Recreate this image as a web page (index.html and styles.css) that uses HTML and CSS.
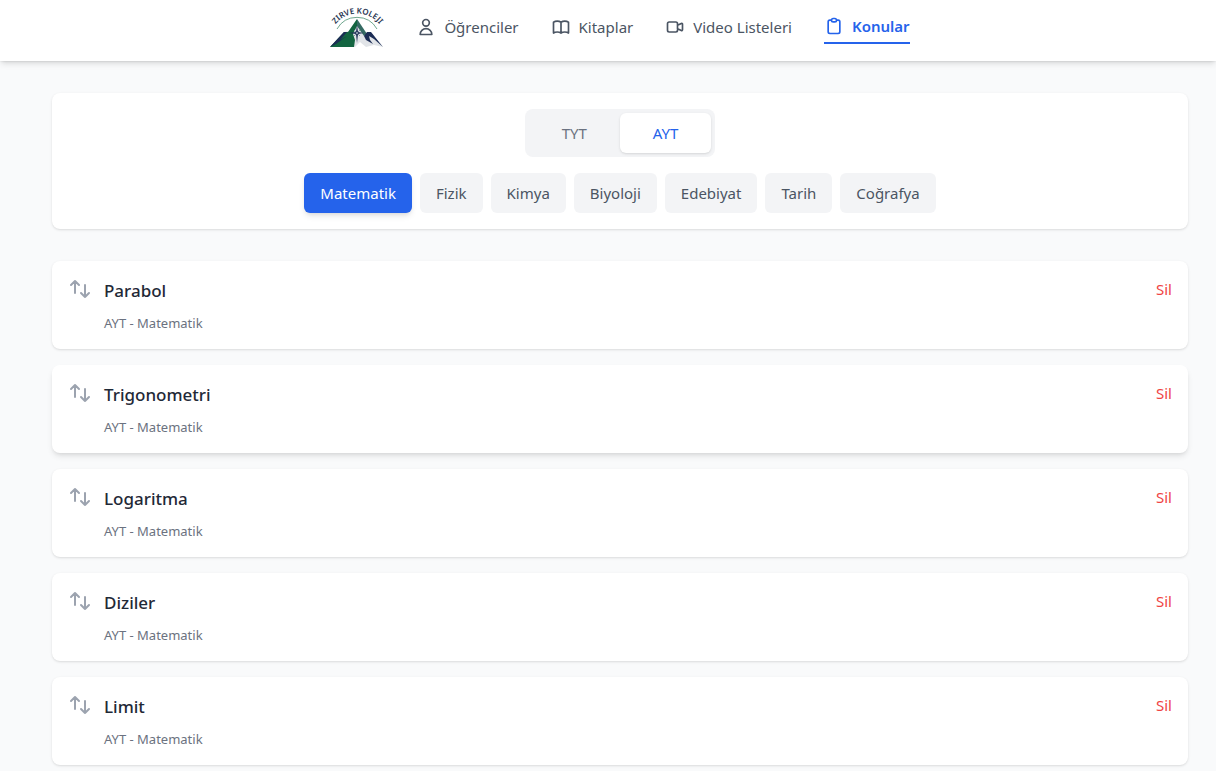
FILE: index.html
```html
<!DOCTYPE html>
<html lang="tr">
<head>
<meta charset="utf-8">
<meta name="viewport" content="width=device-width, initial-scale=1">
<title>Konular</title>
<link rel="stylesheet" href="styles.css">
</head>
<body>
<svg class="sprite" aria-hidden="true">
  <symbol id="sort" viewBox="0 0 24 24"><path d="M7 16V4m0 0L3 8m4-4l4 4m6 0v12m0 0l4-4m-4 4l-4-4"/></symbol>
</svg>
<header class="header">
  <nav class="nav">
    <a class="logo" href="#" aria-label="Ana sayfa">
      <svg class="logo-art" viewBox="0 0 54 42">
        <defs><path id="arc" d="M3 20A28 28 0 0 1 52 20"/></defs>
        <text class="logo-text"><textPath href="#arc" startOffset="50%" text-anchor="middle">ZIRVE KOLEJI</textPath></text>
        <path d="M7 21A23 23 0 0 1 47 21" fill="none" stroke="#6fa78f" stroke-width="1"/>
        <path d="M0 39L14 24L19 23L27 11L36 25L40 24L53 39L44 37L36 39L30 34L25 39Z" fill="#e1e4e8"/>
        <path d="M0 39L14 24L18 24L27 11V18L23 26L25 32L24 39Z" fill="#136541"/>
        <path d="M27 11L37 26L34 28L27 18Z" fill="#356b63"/>
        <path d="M0 39L14 24L17 24L10 32L17 28L6 36ZM34 28L37 24L41 24L53 39L44 31L39 28L40 32L43 36L36 32Z" fill="#1c2d55"/>
        <path d="M27 17L28 24L34 25L28 26L27 35L26 26L19 25L26 24Z" fill="#1c2d55"/>
        <path d="M24 22L30 28M30 22L24 28" stroke="#8393a6" stroke-width="1"/>
      </svg>
    </a>
    <a class="nav-link" href="#"><svg class="icon" viewBox="0 0 24 24"><path d="M16 7a4 4 0 11-8 0 4 4 0 018 0zM12 14a7 7 0 00-7 7h14a7 7 0 00-7-7z"/></svg>Öğrenciler</a>
    <a class="nav-link" href="#"><svg class="icon" viewBox="0 0 24 24"><path d="M12 6.253v13m0-13C10.832 5.477 9.246 5 7.500 5S4.168 5.477 3 6.253v13C4.168 18.477 5.754 18 7.500 18s3.332.477 4.500 1.253m0-13C13.168 5.477 14.754 5 16.500 5c1.747 0 3.332.477 4.500 1.253v13C19.832 18.477 18.247 18 16.500 18c-1.746 0-3.332.477-4.500 1.253"/></svg>Kitaplar</a>
    <a class="nav-link" href="#"><svg class="icon" viewBox="0 0 24 24"><path d="M15 10l4.553-2.276A1 1 0 0121 8.618v6.764a1 1 0 01-1.447.894L15 14M5 18h8a2 2 0 002-2V8a2 2 0 00-2-2H5a2 2 0 00-2 2v8a2 2 0 002 2z"/></svg>Video Listeleri</a>
    <a class="nav-link active" href="#" aria-current="page"><svg class="icon" viewBox="0 0 24 24"><path d="M9 5H7a2 2 0 00-2 2v12a2 2 0 002 2h10a2 2 0 002-2V7a2 2 0 00-2-2h-2M9 5a2 2 0 002 2h2a2 2 0 002-2M9 5a2 2 0 012-2h2a2 2 0 012 2"/></svg>Konular</a>
  </nav>
</header>
<main class="page">
  <section class="card filters">
    <div class="segmented">
      <button class="segment" type="button">TYT</button>
      <button class="segment selected" type="button" aria-pressed="true">AYT</button>
    </div>
    <div class="subjects">
      <button class="subject selected" type="button" aria-pressed="true">Matematik</button>
      <button class="subject" type="button">Fizik</button>
      <button class="subject" type="button">Kimya</button>
      <button class="subject" type="button">Biyoloji</button>
      <button class="subject" type="button">Edebiyat</button>
      <button class="subject" type="button">Tarih</button>
      <button class="subject" type="button">Coğrafya</button>
    </div>
  </section>
  <ul class="topics">
    <li class="card topic"><svg class="handle"><use href="#sort"/></svg><div class="info"><h3 class="title">Parabol</h3><p class="meta">AYT - Matematik</p></div><button class="delete" type="button">Sil</button></li>
    <li class="card topic raised"><svg class="handle"><use href="#sort"/></svg><div class="info"><h3 class="title">Trigonometri</h3><p class="meta">AYT - Matematik</p></div><button class="delete" type="button">Sil</button></li>
    <li class="card topic"><svg class="handle"><use href="#sort"/></svg><div class="info"><h3 class="title">Logaritma</h3><p class="meta">AYT - Matematik</p></div><button class="delete" type="button">Sil</button></li>
    <li class="card topic"><svg class="handle"><use href="#sort"/></svg><div class="info"><h3 class="title">Diziler</h3><p class="meta">AYT - Matematik</p></div><button class="delete" type="button">Sil</button></li>
    <li class="card topic"><svg class="handle"><use href="#sort"/></svg><div class="info"><h3 class="title">Limit</h3><p class="meta">AYT - Matematik</p></div><button class="delete" type="button">Sil</button></li>
  </ul>
</main>
</body>
</html>
```
FILE: styles.css
```css
* { box-sizing: border-box; }
html { scrollbar-width: none; }
body {
  margin: 0;
  background: #f9fafb;
  color: #1f2937;
  font: 15px/24px "Segoe UI", "Noto Sans", sans-serif;
}
h3, p, ul { margin: 0; padding: 0; }
button { border: 0; background: none; font: inherit; cursor: pointer; }
.sprite { display: none; }
.header {
  padding: 8px 0 11px 24px;
  background: #fff;
  box-shadow: 0 4px 6px -1px rgb(0 0 0 / 0.1), 0 2px 4px -2px rgb(0 0 0 / 0.1), 0 0 2px rgb(0 0 0 / 0.1);
}
.nav { display: flex; justify-content: center; align-items: center; gap: 32px; }
.logo { display: flex; }
.logo-art { width: 54px; height: 42px; overflow: visible; }
.logo-text { font: 600 8px "Noto Sans", sans-serif; fill: #26344f; }
.nav-link {
  display: flex;
  align-items: center;
  gap: 8px;
  padding-bottom: 4px;
  color: #4b5563;
  text-decoration: none;
}
.nav-link.active { color: #2563eb; font-weight: 600; border-bottom: 2px solid #2563eb; }
.icon, .handle { fill: none; stroke: currentColor; stroke-width: 2; stroke-linecap: round; stroke-linejoin: round; }
.icon { width: 20px; height: 20px; }
.page { padding: 32px 28px 32px 52px; }
.card {
  padding: 16px;
  background: #fff;
  border-radius: 8px;
  box-shadow: 0 1px 3px rgb(0 0 0 / 0.1), 0 1px 2px -1px rgb(0 0 0 / 0.1);
}
.filters { display: flex; flex-direction: column; align-items: center; gap: 16px; margin-bottom: 32px; }
.segmented { display: flex; padding: 4px; border-radius: 8px; background: #f3f4f6; }
.segment { padding: 8px 33px; border-radius: 6px; color: #6b7280; }
.segment.selected { background: #fff; color: #2563eb; box-shadow: 0 1px 3px rgb(0 0 0 / 0.1), 0 1px 2px -1px rgb(0 0 0 / 0.1); }
.subjects { display: flex; flex-wrap: wrap; justify-content: center; gap: 8px; }
.subject { padding: 8px 16px; border-radius: 6px; background: #f3f4f6; color: #4b5563; }
.subject.selected { background: #2563eb; color: #fff; box-shadow: 0 4px 6px -1px rgb(0 0 0 / 0.1), 0 2px 4px -2px rgb(0 0 0 / 0.1); }
.topics { display: grid; gap: 16px; list-style: none; }
.topic { display: flex; align-items: flex-start; gap: 12px; }
.topic.raised { box-shadow: 0 4px 6px -1px rgb(0 0 0 / 0.1), 0 2px 4px -2px rgb(0 0 0 / 0.1); }
.handle { width: 24px; height: 24px; color: #9ca3af; }
.info { flex: 1; }
.title { font-size: 17px; line-height: 28px; font-weight: 500; }
.meta { margin-top: 8px; font-size: 13px; line-height: 20px; color: #6b7280; }
.delete { padding: 0; color: #ef4444; }
```
